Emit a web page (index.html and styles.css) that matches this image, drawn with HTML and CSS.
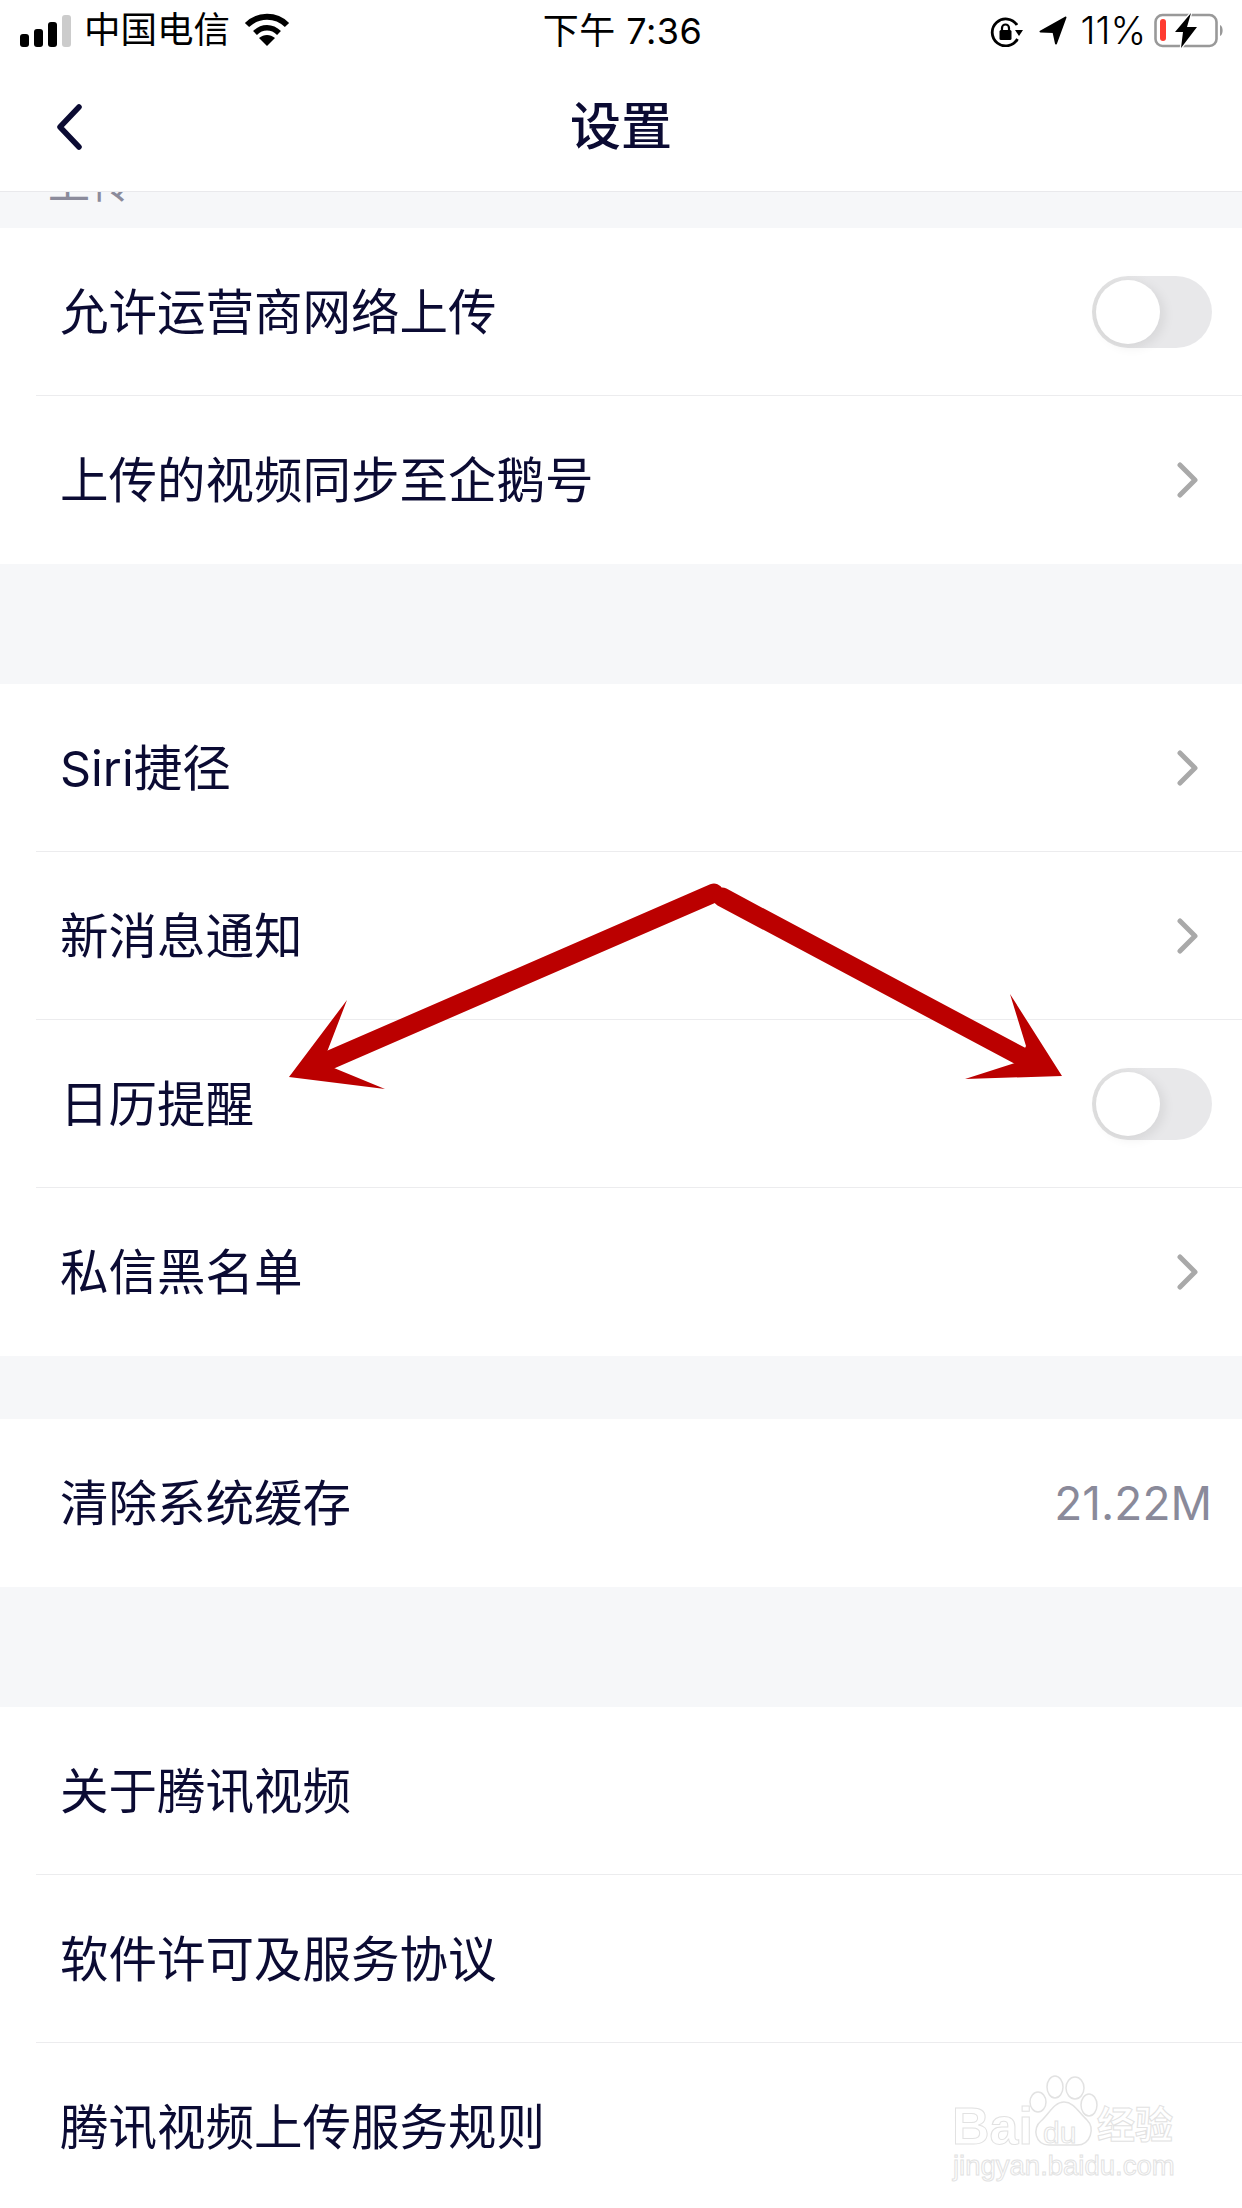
FILE: index.html
```html
<!DOCTYPE html>
<html lang="zh">
<head>
    <meta charset="utf-8">
    <meta name="viewport" content="width=device-width, initial-scale=1.0">
    <title>设置</title>
    <link rel="stylesheet" href="styles.css">
</head>
<body>
<div class="page">
    <div class="statusBar">
        <div class="statusLeft">
            <div class="signal">
                <i class="bar1"></i><i class="bar2"></i><i class="bar3"></i><i class="bar4"></i>
            </div>
            <span class="carrier">中国电信</span>
            <svg class="wifi" width="46" height="33" viewBox="0 0 46 33">
                <path d="M3 12C14 1 32 1 43 12" fill="none" stroke="#000" stroke-width="6"/>
                <path d="M11 20C18 13 28 13 35 20" fill="none" stroke="#000" stroke-width="5.500"/>
                <path d="M23 33L15 25C20 21 26 21 31 25Z" fill="#000"/>
            </svg>
        </div>
        <div class="statusTime">下午 7:36</div>
        <div class="statusRight">
            <svg class="lockIcon" width="33" height="30" viewBox="0 0 33 30">
                <path d="M27 8A13.500 13.500 0 1 0 27.500 22" fill="none" stroke="#000" stroke-width="2.800"/>
                <path d="M25 13H33L29 19Z" fill="#000"/>
                <rect x="9.500" y="13" width="12" height="10" rx="1.500" fill="#000"/>
                <path d="M12 14V11a3.500 3.500 0 0 1 7 0V14" fill="none" stroke="#000" stroke-width="2.200"/>
            </svg>
            <svg class="locIcon" width="28" height="29" viewBox="0 0 28 29">
                <path d="M26.500 1.500L1.500 15.500L14.500 16L17 27.500Z" fill="#000" stroke="#000" stroke-width="2" stroke-linejoin="round"/>
            </svg>
            <span class="battPct">11%</span>
            <svg class="battery" width="71" height="35" viewBox="0 0 71 35">
                <rect x="1.500" y="2" width="61" height="31" rx="7" fill="none" stroke="#999" stroke-width="2.600"/>
                <rect x="6" y="6" width="6" height="22" rx="3" fill="#ff3b30"/>
                <path d="M66 12C69.500 13 69.500 22 66 23Z" fill="#999"/>
                <path d="M37 0L21 19H29L27 35L43 14H33Z" fill="#000" stroke="#fff" stroke-width="2.500" paint-order="stroke"/>
            </svg>
        </div>
    </div>

    <div class="navBar">
        <svg class="backBtn" width="28" height="46" viewBox="0 0 28 46">
            <path d="M24 3L5 23L24 43" fill="none" stroke="#0b0b33" stroke-width="5.500" stroke-linecap="round" stroke-linejoin="round"/>
        </svg>
        <div class="navTitle">设置</div>
    </div>

    <div class="band bandClipped"><span class="clippedHead">上传</span></div>

    <div class="row">
        <div class="rowInner">
            <span class="rowText">允许运营商网络上传</span>
            <span class="toggle"><span class="knob"></span></span>
        </div>
    </div>
    <div class="row rowLast">
        <div class="rowInner">
            <span class="rowText">上传的视频同步至企鹅号</span>
            <svg class="chevron" width="22" height="36" viewBox="0 0 22 36"><path d="M3 3L18 18L3 33" fill="none" stroke="#a9a9a9" stroke-width="5" stroke-linecap="round" stroke-linejoin="round"/></svg>
        </div>
    </div>

    <div class="band bandLarge"></div>

    <div class="row">
        <div class="rowInner">
            <span class="rowText">Siri捷径</span>
            <svg class="chevron" width="22" height="36" viewBox="0 0 22 36"><path d="M3 3L18 18L3 33" fill="none" stroke="#a9a9a9" stroke-width="5" stroke-linecap="round" stroke-linejoin="round"/></svg>
        </div>
    </div>
    <div class="row">
        <div class="rowInner">
            <span class="rowText">新消息通知</span>
            <svg class="chevron" width="22" height="36" viewBox="0 0 22 36"><path d="M3 3L18 18L3 33" fill="none" stroke="#a9a9a9" stroke-width="5" stroke-linecap="round" stroke-linejoin="round"/></svg>
        </div>
    </div>
    <div class="row">
        <div class="rowInner">
            <span class="rowText">日历提醒</span>
            <span class="toggle"><span class="knob"></span></span>
        </div>
    </div>
    <div class="row rowLast">
        <div class="rowInner">
            <span class="rowText">私信黑名单</span>
            <svg class="chevron" width="22" height="36" viewBox="0 0 22 36"><path d="M3 3L18 18L3 33" fill="none" stroke="#a9a9a9" stroke-width="5" stroke-linecap="round" stroke-linejoin="round"/></svg>
        </div>
    </div>

    <div class="band bandSmall"></div>

    <div class="row rowLast">
        <div class="rowInner">
            <span class="rowText">清除系统缓存</span>
            <span class="rowValue">21.22M</span>
        </div>
    </div>

    <div class="band bandLarge"></div>

    <div class="row">
        <div class="rowInner"><span class="rowText">关于腾讯视频</span></div>
    </div>
    <div class="row">
        <div class="rowInner"><span class="rowText">软件许可及服务协议</span></div>
    </div>
    <div class="row rowLast">
        <div class="rowInner"><span class="rowText">腾讯视频上传服务规则</span></div>
    </div>

    <!-- red annotation arrows drawn over the screenshot -->
    <svg class="arrows" width="1242" height="2208" viewBox="0 0 1242 2208">
        <line x1="714" y1="893" x2="325" y2="1062" stroke="#bb0000" stroke-width="19" stroke-linecap="round"/>
        <polygon points="289,1077 347,1000 327,1052 334,1068 385,1089" fill="#bb0000"/>
        <line x1="722" y1="897" x2="1024" y2="1058" stroke="#bb0000" stroke-width="19" stroke-linecap="round"/>
        <polygon points="1062,1076 1010,994 1026,1046 1018,1062 965,1079" fill="#bb0000"/>
    </svg>

    <div class="watermark">
        <svg class="wmPaw" width="70" height="74" viewBox="0 0 70 74">
            <g fill="#fff" stroke="#e2e2e2" stroke-width="1.500">
                <ellipse cx="9" cy="27" rx="8" ry="10"/>
                <ellipse cx="26" cy="12" rx="8" ry="11"/>
                <ellipse cx="46" cy="13" rx="9" ry="11"/>
                <ellipse cx="60" cy="30" rx="8" ry="11"/>
                <path d="M35 27C45 27 50 38 58 45C66 53 62 70 48 70H20C6 70 3 53 12 46C20 39 25 27 35 27Z"/>
            </g>
        </svg>
        <span class="wmBai">Bai</span>
        <span class="wmDu">du</span>
        <span class="wmCn">经验</span>
        <span class="wmUrl">jingyan.baidu.com</span>
    </div>
</div>
</body>
</html>
```

FILE: styles.css
```css
html, body {
    margin: 0;
    padding: 0;
    background: #fff;
}
.page {
    position: relative;
    width: 1242px;
    height: 2208px;
    overflow: hidden;
    background: #fff;
    font-family: "Inter", "Noto Sans CJK SC", sans-serif;
    color: #0b0b33;
}

/* status bar */
.statusBar {
    display: grid;
    grid-template-columns: 1fr auto 1fr;
    align-items: center;
    height: 60px;
    padding: 0 17px 0 20px;
    color: #000;
}
.statusLeft {
    display: flex;
    align-items: center;
}
.signal {
    display: flex;
    align-items: flex-end;
    gap: 5px;
    height: 33px;
    margin-top: 1px;
}
.signal i {
    display: block;
    width: 9px;
    border-radius: 3px;
    background: #000;
}
.signal .bar1 { height: 13px; }
.signal .bar2 { height: 18px; }
.signal .bar3 { height: 25px; }
.signal .bar4 { height: 32px; background: #ccc; }
.carrier {
    margin-left: 13px;
    font-size: 36.5px;
    line-height: 44px;
}
.wifi {
    margin-left: 14px;
    margin-top: -2px;
}
.statusTime {
    font-size: 36px;
    line-height: 44px;
    letter-spacing: 0.5px;
    margin-top: 1px;
}
.statusRight {
    display: flex;
    align-items: center;
    justify-content: flex-end;
}
.lockIcon { margin-top: 3px; }
.locIcon {
    margin-left: 16px;
    margin-top: 1px;
}
.battPct {
    margin-left: 13px;
    font-size: 38px;
    line-height: 44px;
    font-weight: 300;
}
.battery {
    margin-left: 8px;
}

/* nav */
.navBar {
    display: flex;
    align-items: center;
    justify-content: center;
    position: relative;
    height: 131px;
    border-bottom: 1px solid #e9e9ec;
}
.backBtn {
    position: absolute;
    left: 55px;
    top: 44px;
}
.navTitle {
    font-size: 51px;
    font-weight: 500;
    line-height: 60px;
    margin-top: 3px;
}

/* gray section bands */
.band {
    background: #f6f7f9;
}
.bandClipped {
    height: 36px;
    overflow: hidden;
    padding-left: 48px;
}
.clippedHead {
    display: block;
    margin-top: -30px;
    font-size: 42px;
    line-height: 42px;
    letter-spacing: 1px;
    color: #8b8b9b;
}
.bandLarge { height: 120px; }
.bandSmall { height: 63px; }

/* rows */
.row {
    height: 168px;
    padding-left: 36px;
    box-sizing: border-box;
}
.rowInner {
    display: flex;
    align-items: center;
    justify-content: space-between;
    height: 100%;
    box-sizing: border-box;
    padding: 0 30px 0 24px;
    border-bottom: 1px solid #ececee;
}
.rowLast .rowInner {
    border-bottom: none;
}
.rowText {
    font-size: 48.5px;
    line-height: 60px;
    margin-top: 2px;
    white-space: nowrap;
}
.rowValue {
    font-size: 46px;
    line-height: 60px;
    color: #8a8a9a;
}
.chevron {
    margin-right: 13px;
}
.toggle {
    position: relative;
    display: block;
    width: 120px;
    height: 72px;
    border-radius: 36px;
    background: linear-gradient(90deg, #dedede, #e8e8ea 45%);
}
.knob {
    position: absolute;
    left: 4px;
    top: 4px;
    width: 64px;
    height: 64px;
    border-radius: 50%;
    background: #fff;
    box-shadow: 4px 3px 12px rgba(0, 0, 0, 0.08);
}

/* annotation + watermark */
.arrows {
    position: absolute;
    left: 0;
    top: 0;
}
.watermark {
    position: absolute;
    left: 950px;
    top: 2070px;
    width: 240px;
    height: 120px;
}
.wmPaw {
    position: absolute;
    left: 79px;
    top: 5px;
}
.wmBai, .wmDu, .wmCn, .wmUrl {
    position: absolute;
    color: #fff;
    -webkit-text-stroke: 1px #e2e2e2;
    white-space: nowrap;
    font-family: "Liberation Sans", "Noto Sans CJK SC", sans-serif;
}
.wmBai {
    left: 2px;
    top: 28px;
    font-size: 52px;
    line-height: 56px;
    font-weight: 700;
}
.wmDu {
    left: 93px;
    top: 46px;
    font-size: 30px;
    line-height: 34px;
}
.wmCn {
    left: 147px;
    top: 30px;
    font-size: 38px;
    line-height: 50px;
    font-weight: 700;
}
.wmUrl {
    left: 3px;
    top: 78px;
    font-size: 27.5px;
    line-height: 36px;
}
```
